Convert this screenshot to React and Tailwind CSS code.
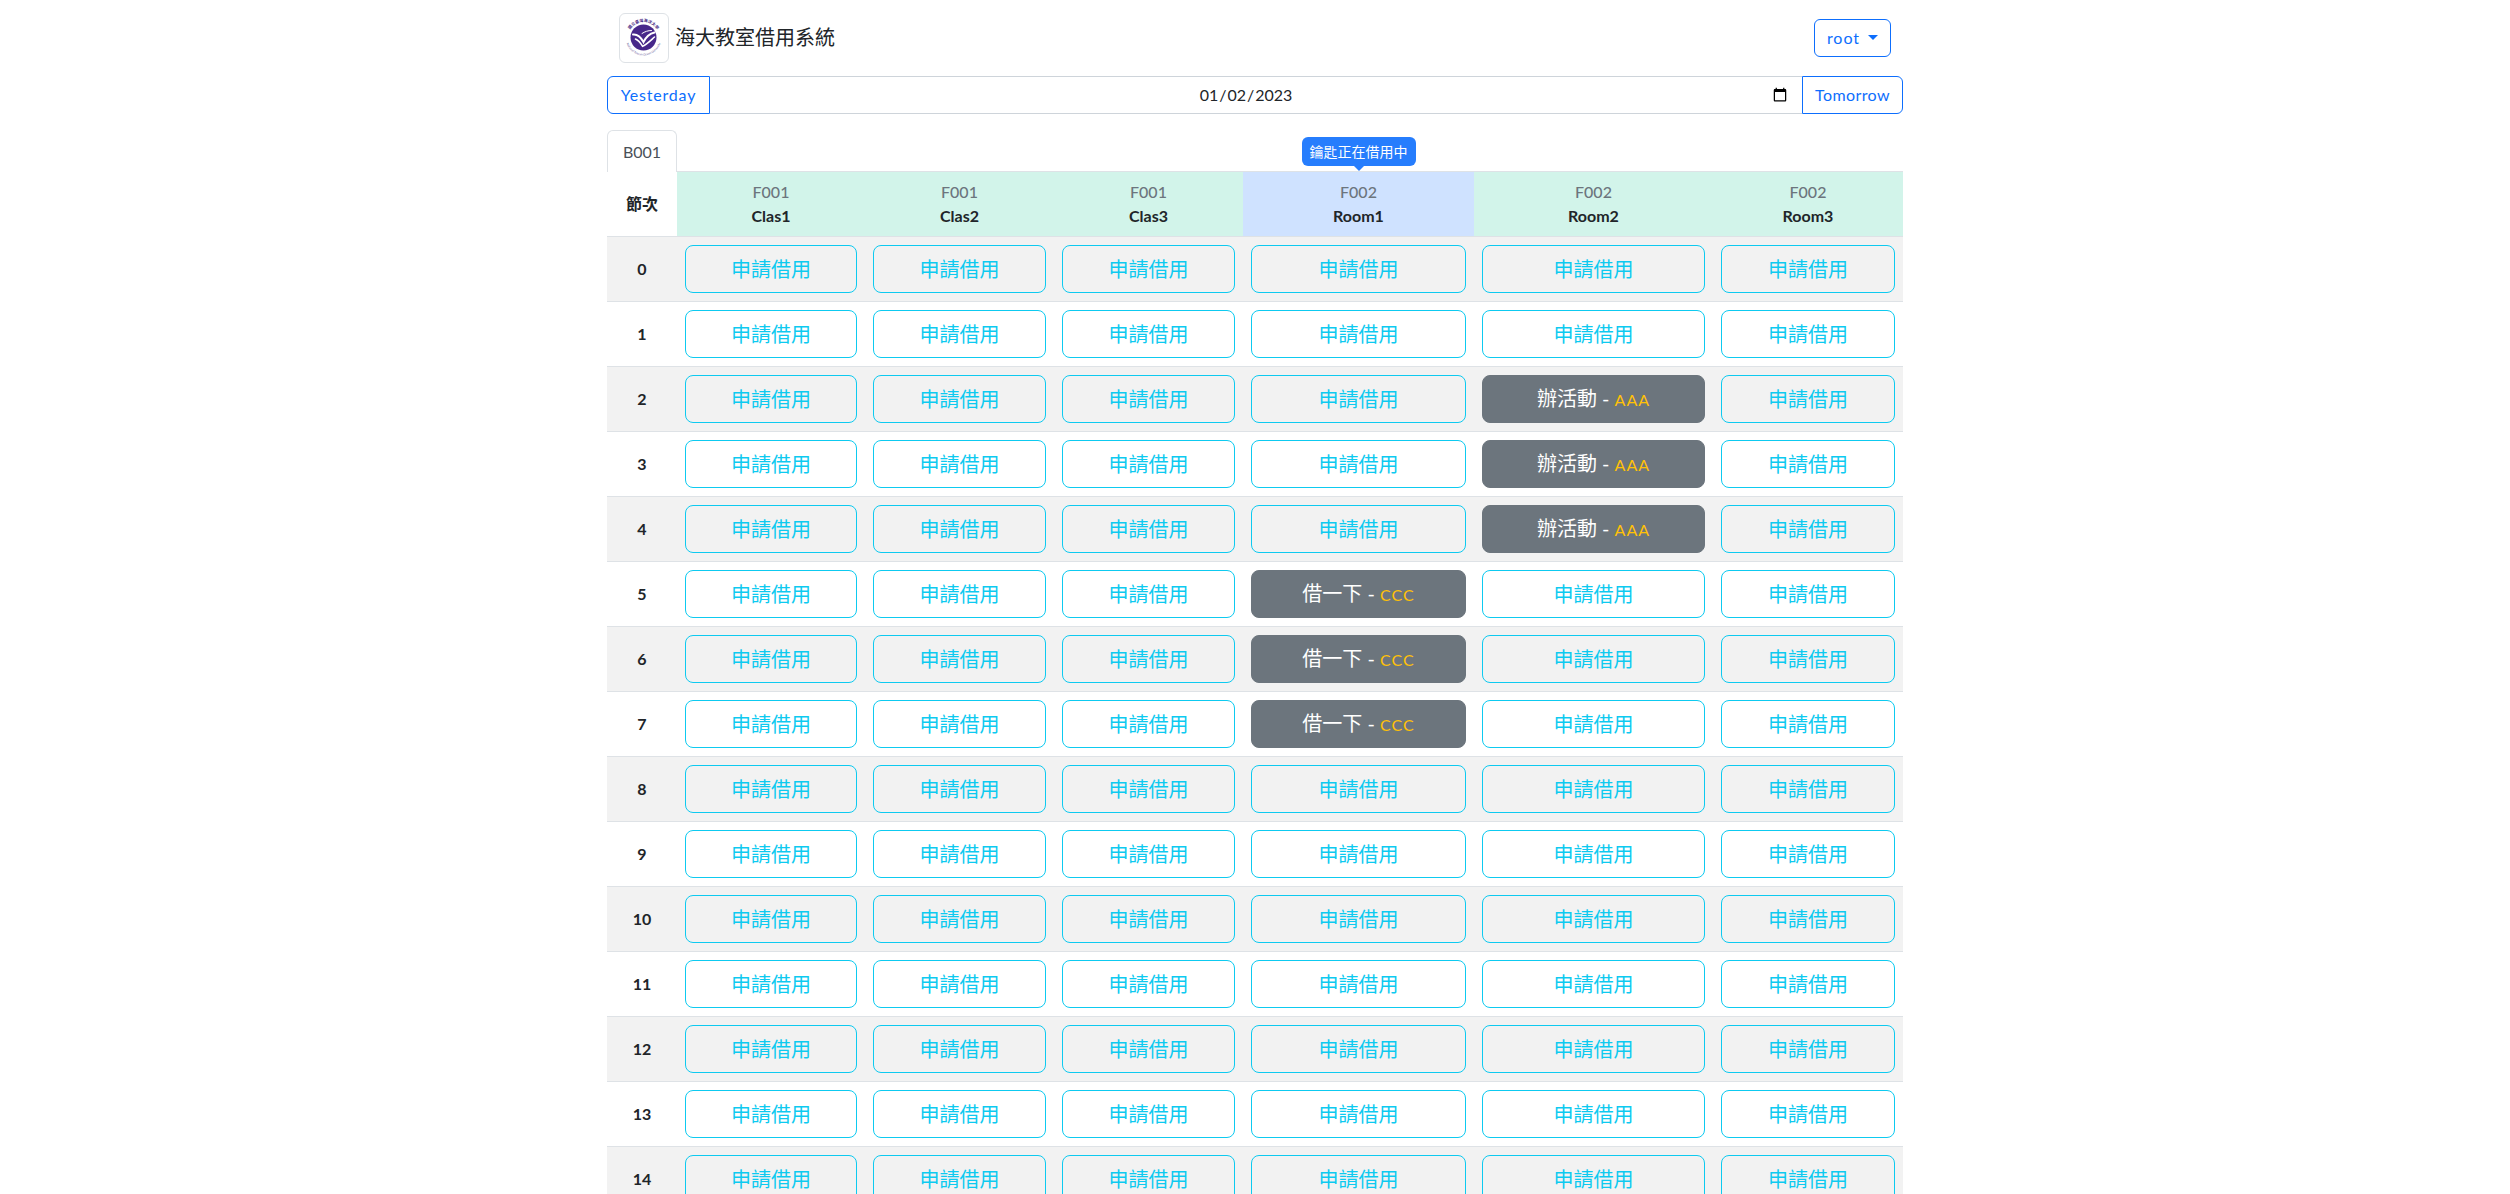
const cjk = "font-['Lato','Noto_Sans_CJK_TC',sans-serif]";

const heads = [
  { f: "F001", n: "Clas1" },
  { f: "F001", n: "Clas2" },
  { f: "F001", n: "Clas3" },
  { f: "F002", n: "Room1", key: true },
  { f: "F002", n: "Room2" },
  { f: "F002", n: "Room3" },
];

const widths = ["w-[188px]", "w-[189px]", "w-[189px]", "w-[231px]", "w-[239px]", "w-[190px]"];

const booked = {
  "2-4": ["辦活動", "AAA"],
  "3-4": ["辦活動", "AAA"],
  "4-4": ["辦活動", "AAA"],
  "5-3": ["借一下", "CCC"],
  "6-3": ["借一下", "CCC"],
  "7-3": ["借一下", "CCC"],
};

function Logo() {
  return (
    <svg viewBox="0 0 40 40" className="block w-[40px] h-[40px] overflow-visible">
      <defs>
        <path id="ringTop" d="M4 19.500a15.500 15.500 0 0 1 31 0" />
        <path id="ringBottom" d="M1.500 19.500a18 18 0 0 0 36 0" />
      </defs>
      <text fontSize="4" fontWeight="700" fill="#4a2c86" textAnchor="middle">
        <textPath href="#ringTop" startOffset="50%">國立臺灣海洋大學</textPath>
      </text>
      <text fontSize="3" fill="#6a5a9c" textAnchor="middle">
        <textPath href="#ringBottom" startOffset="50%">National Taiwan Ocean University</textPath>
      </text>
      <circle cx="19.500" cy="19.500" r="13" fill="#47288a" />
      <g fill="none" stroke="#fff" strokeLinecap="round">
        <path d="M9 16.500C13 16 17 19.500 19.500 24 22 19 26 15.500 30.500 14.500" strokeWidth="2" />
        <path d="M11.500 21C14 22 16.500 25 18.500 28.200 22 27 26.500 22.500 30.500 19" strokeWidth="1.600" />
        <path d="M18 15.500C21 13.500 24 12.500 27.500 12.500" strokeWidth="1" />
      </g>
    </svg>
  );
}

function Slot({ r, c }) {
  const b = booked[`${r}-${c}`];
  if (b) {
    return (
      <button className="w-full h-[48px] rounded-lg bg-[#6c757d] border border-[#6c757d] text-white text-[20px] leading-[30px]">
        {b[0]} - <span className="text-[#ffc107] text-[16px] tracking-[1px]">{b[1]}</span>
      </button>
    );
  }
  return (
    <button className="w-full h-[48px] rounded-lg border border-[#0dcaf0] text-[#0dcaf0] text-[20px] leading-[30px]">
      申請借用
    </button>
  );
}

export default function App() {
  const rows = Array.from({ length: 15 }, (_, i) => i);
  return (
    <div className={`h-screen overflow-hidden bg-white text-[#212529] text-base ${cjk}`}>
      <div className="w-[1296px] mx-auto">
        <header className="flex items-center justify-between px-3 pt-[13px] pb-[13px]">
          <div className="flex items-center gap-[6px]">
            <div className="w-[50px] h-[50px] p-1 rounded-md border border-[#dee2e6] bg-white">
              <Logo />
            </div>
            <span className="pb-[3px] text-[20px] leading-[30px] text-[#212529]">海大教室借用系統</span>
          </div>
          <button className="flex items-center gap-2 h-[38px] w-[77px] justify-center rounded-md border border-[#0d6efd] text-[#0d6efd] text-[16px] tracking-[1px]">
            root
            <span className="w-0 h-0 mb-0.5 border-x-[5px] border-x-transparent border-t-[5px] border-t-[#0d6efd]" />
          </button>
        </header>

        <div className="flex h-[38px] mb-4">
          <button className="w-[103px] shrink-0 rounded-l-md border border-[#0d6efd] text-[#0d6efd] text-[16px] tracking-[0.8px]">
            Yesterday
          </button>
          <input
            type="date"
            defaultValue="2023-01-02"
            className="flex-1 min-w-0 border-y border-[#ced4da] px-3 text-[16px] text-[#212529] outline-none text-center [&::-webkit-datetime-edit]:flex [&::-webkit-datetime-edit]:justify-center [&::-webkit-datetime-edit-fields-wrapper]:mx-auto"
          />
          <button className="w-[101px] shrink-0 rounded-r-md border border-[#0d6efd] text-[#0d6efd] text-[16px] tracking-[0.4px]">
            Tomorrow
          </button>
        </div>

        <div className="flex h-[42px] border-b border-[#dee2e6]">
          <div className="w-[70px] h-[42px] flex items-center justify-center rounded-t-md border border-b-0 border-[#dee2e6] bg-white text-[#495057] text-[16px]">
            B001
          </div>
        </div>

        <table className="w-full table-fixed border-collapse">
          <thead>
            <tr className="h-[64px] border-b border-[#dee2e6]">
              <th className="w-[70px] font-bold text-[16px] bg-white">節次</th>
              {heads.map((h, i) => (
                <th
                  key={i}
                  className={`relative font-normal text-center text-[16px] leading-[24px] ${widths[i]} ${h.key ? "bg-[#cfe2ff]" : "bg-[#d2f4ea]"}`}
                >
                  {h.key && (
                    <div className="absolute left-1/2 -translate-x-1/2 -top-[35px] flex flex-col items-center">
                      <div className="h-[29px] w-[114px] flex items-center justify-center rounded-md bg-[#267dfd] text-white text-[14px]">
                        鑰匙正在借用中
                      </div>
                      <div className="w-0 h-0 border-x-[5px] border-x-transparent border-t-[5px] border-t-[#267dfd]" />
                    </div>
                  )}
                  <div className="text-[#6c757d] font-medium">{h.f}</div>
                  <div className="font-bold text-[#212529]">{h.n}</div>
                </th>
              ))}
            </tr>
          </thead>
          <tbody>
            {rows.map((r) => (
              <tr key={r} className={`border-b border-[#dee2e6] ${r % 2 === 0 ? "bg-[#f2f2f2]" : "bg-white"}`}>
                <td className="text-center font-bold text-[16px]">{r}</td>
                {heads.map((_, c) => (
                  <td key={c} className="p-2">
                    <Slot r={r} c={c} />
                  </td>
                ))}
              </tr>
            ))}
          </tbody>
        </table>
      </div>
    </div>
  );
}
